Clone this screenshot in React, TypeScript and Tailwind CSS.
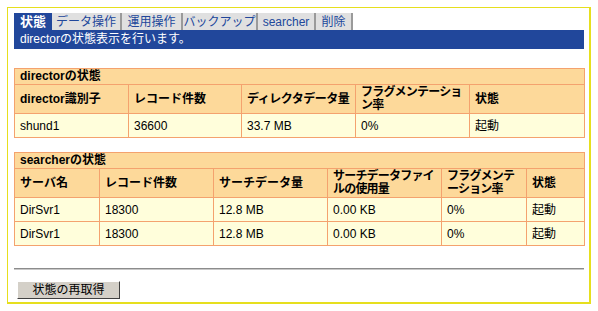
const font = { fontFamily: '"Liberation Sans", "Noto Sans CJK JP", sans-serif' };

type Tab = { label: string; w: string; active?: boolean };

const tabs: Tab[] = [
  { label: "状態", w: "w-[38px]", active: true },
  { label: "データ操作", w: "w-[70px]" },
  { label: "運用操作", w: "w-[61px]" },
  { label: "バックアップ", w: "w-[75px]" },
  { label: "searcher", w: "w-[58px]" },
  { label: "削除", w: "w-[37px]" },
];

const th = "border border-[#f4a26e] px-[5px] text-left align-middle font-bold leading-[13px] whitespace-nowrap";
const td = "border border-[#f4a26e] px-[5px] text-left align-middle font-normal";

export default function App() {
  return (
    <div className="w-[598px] h-[311px] bg-white pt-[7px] pl-[7px] text-[12px] text-black" style={font}>
      <div className="w-[584px] h-[297px] border border-r-2 border-b-2 border-[#e6df1e] pl-[6px] pr-[5px] pt-[5px]">
        {/* タブ */}
        <div className="flex h-[17px]">
          {tabs.map((t) => (
            <div
              key={t.label}
              className={
                t.active
                  ? `${t.w} flex items-center justify-center bg-[#21479b] text-white font-bold text-[13px]`
                  : `${t.w} flex items-center justify-center bg-[#e0e0e0] border-r-2 border-[#9a9a9a] text-[#21479b] text-[12px]`
              }
            >
              {t.label}
            </div>
          ))}
        </div>
        <div className="h-[19px] bg-[#21479b] text-white pl-[6px] leading-[19px]">directorの状態表示を行います。</div>

        {/* director */}
        <table className="mt-[19px] w-[570px] table-fixed border-collapse">
          <colgroup>
            <col className="w-[114px]" />
            <col className="w-[113px]" />
            <col className="w-[114px]" />
            <col className="w-[114px]" />
            <col className="w-[115px]" />
          </colgroup>
          <tbody>
            <tr className="h-[16px] bg-[#fdd99a]">
              <th colSpan={5} className={th}>directorの状態</th>
            </tr>
            <tr className="h-[29px] bg-[#fdd99a]">
              <th className={th}>director識別子</th>
              <th className={th}>レコード件数</th>
              <th className={`${th} tracking-[-0.5px]`}>ディレクタデータ量</th>
              <th className={`${th} tracking-[-0.8px]`}>
                フラグメンテーショ
                <br />
                ン率
              </th>
              <th className={th}>状態</th>
            </tr>
            <tr className="h-[24px] bg-[#fffedb]">
              <td className={td}>shund1</td>
              <td className={td}>36600</td>
              <td className={td}>33.7 MB</td>
              <td className={td}>0%</td>
              <td className={td}>起動</td>
            </tr>
          </tbody>
        </table>

        {/* searcher */}
        <table className="mt-[14px] w-[570px] table-fixed border-collapse">
          <colgroup>
            <col className="w-[85px]" />
            <col className="w-[114px]" />
            <col className="w-[114px]" />
            <col className="w-[114px]" />
            <col className="w-[85px]" />
            <col className="w-[58px]" />
          </colgroup>
          <tbody>
            <tr className="h-[16px] bg-[#fdd99a]">
              <th colSpan={6} className={th}>searcherの状態</th>
            </tr>
            <tr className="h-[29px] bg-[#fdd99a]">
              <th className={th}>サーバ名</th>
              <th className={th}>レコード件数</th>
              <th className={th}>サーチデータ量</th>
              <th className={`${th} tracking-[-0.8px]`}>
                サーチデータファイ
                <br />
                ルの使用量
              </th>
              <th className={`${th} tracking-[-0.8px]`}>
                フラグメンテ
                <br />
                ーション率
              </th>
              <th className={th}>状態</th>
            </tr>
            {[0, 1].map((i) => (
              <tr key={i} className="h-[24px] bg-[#fffedb]">
                <td className={td}>DirSvr1</td>
                <td className={td}>18300</td>
                <td className={td}>12.8 MB</td>
                <td className={td}>0.00 KB</td>
                <td className={td}>0%</td>
                <td className={td}>起動</td>
              </tr>
            ))}
          </tbody>
        </table>

        <div className="mt-[22px] h-0 border-t border-b border-t-[#8c8c8c] border-b-[#c8c8c8]" />

        <button className="mt-[11px] ml-[3px] w-[103px] h-[18px] bg-[#d4d0c8] border border-t-white border-l-white border-r-[#404040] border-b-[#404040] text-[12px] leading-[15px] text-black">
          状態の再取得
        </button>
      </div>
    </div>
  );
}
